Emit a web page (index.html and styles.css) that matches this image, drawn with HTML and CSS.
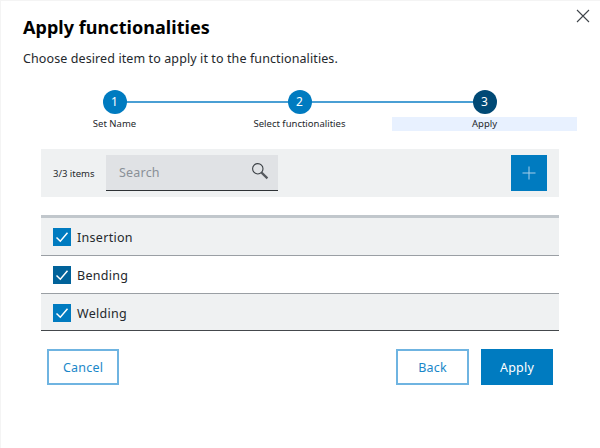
FILE: index.html
```html
<!DOCTYPE html>
<html lang="en">
<head>
<meta charset="utf-8">
<title>Apply functionalities</title>
<link rel="stylesheet" href="styles.css">
</head>
<body>
<div class="dialog">
  <button class="close" aria-label="Close">
    <svg width="14" height="14" viewBox="0 0 14 14"><path d="M1 1L13 13M13 1L1 13" fill="none" stroke="#3f444a" stroke-width="1.1"/></svg>
  </button>
  <h1 class="title">Apply functionalities</h1>
  <p class="subtitle">Choose desired item to apply it to the functionalities.</p>
  <div class="stepper">
    <div class="step step-first"><span class="circle">1</span><span class="step-label">Set Name</span></div>
    <div class="step"><span class="circle">2</span><span class="step-label">Select functionalities</span></div>
    <div class="step step-last step-active"><span class="circle">3</span><span class="step-label">Apply</span></div>
  </div>
  <div class="toolbar">
    <span class="count">3/3 items</span>
    <div class="search">
      <span class="search-text">Search</span>
      <svg width="18" height="18" viewBox="0 0 18 18"><circle cx="6.8" cy="6.8" r="5.2" fill="none" stroke="#3a3f44" stroke-width="1.1"/><path d="M10.6 10.6L16.4 16.4" stroke="#55595e" stroke-width="2.2"/></svg>
    </div>
    <button class="add" aria-label="Add">
      <svg width="14" height="14" viewBox="0 0 14 14"><path d="M7 0.5V13.5M0.5 7H13.5" stroke="#a8d0ea" stroke-width="1"/></svg>
    </button>
  </div>
  <ul class="list">
    <li class="row row-alt"><span class="check"><svg width="18" height="18" viewBox="0 0 18 18"><path d="M3.5 9.5L7.3 13.2L14.5 4.8" fill="none" stroke="#fff" stroke-width="1.5"/></svg></span>Insertion</li>
    <li class="row"><span class="check check-dark"><svg width="18" height="18" viewBox="0 0 18 18"><path d="M3.5 9.5L7.3 13.2L14.5 4.8" fill="none" stroke="#fff" stroke-width="1.5"/></svg></span>Bending</li>
    <li class="row row-alt row-end"><span class="check"><svg width="18" height="18" viewBox="0 0 18 18"><path d="M3.5 9.5L7.3 13.2L14.5 4.8" fill="none" stroke="#fff" stroke-width="1.5"/></svg></span>Welding</li>
  </ul>
  <div class="actions">
    <button class="btn btn-outline">Cancel</button>
    <div class="actions-right">
      <button class="btn btn-outline btn-back">Back</button>
      <button class="btn btn-primary">Apply</button>
    </div>
  </div>
</div>
</body>
</html>
```

FILE: styles.css
```css
* { box-sizing: border-box; }
html, body { margin: 0; padding: 0; }
body {
  width: 600px;
  height: 448px;
  background: #fff;
  font-family: "Noto Sans", "Open Sans", sans-serif;
  color: #1f2428;
  overflow: hidden;
}
.dialog {
  position: relative;
  width: 600px;
  height: 448px;
  padding: 15px 22px 0;
  border-left: 1px solid #f4f4f4;
  border-top: 1px solid #f4f4f4;
}
.close {
  position: absolute;
  top: 8px;
  right: 10px;
  width: 14px;
  height: 14px;
  padding: 0;
  border: 0;
  background: none;
  display: block;
}
.close svg { display: block; }
.title {
  margin: 0;
  font-size: 18px;
  line-height: 22px;
  font-weight: 700;
  letter-spacing: 0.05px;
  color: #000;
}
.subtitle {
  margin: 11px 0 0;
  font-size: 12.5px;
  line-height: 20px;
  letter-spacing: 0.1px;
  color: #24282c;
}
.stepper {
  display: grid;
  grid-template-columns: repeat(3, 185px);
  margin: 21px 0 0 -1px;
}
.step {
  position: relative;
  display: flex;
  flex-direction: column;
  align-items: center;
}
.step::before {
  content: "";
  position: absolute;
  top: 11px;
  left: 0;
  right: 0;
  height: 2px;
  background: #4a9fd4;
}
.step-first::before { left: 50%; }
.step-last::before { right: 50%; }
.circle {
  position: relative;
  width: 24px;
  height: 24px;
  border-radius: 50%;
  background: #007bc0;
  color: #fff;
  font-size: 12px;
  line-height: 24px;
  text-align: center;
}
.step-active .circle { background: #004975; }
.step-label {
  align-self: stretch;
  margin-top: 3px;
  height: 14px;
  font-size: 9.5px;
  line-height: 14px;
  text-align: center;
  color: #24282c;
}
.step-active .step-label { background: #e8f1ff; }
.toolbar {
  display: flex;
  align-items: center;
  width: 518px;
  height: 48px;
  margin: 18px 0 0 18px;
  padding: 0 12px;
  background: #eff1f2;
}
.count {
  width: 53px;
  font-size: 9.5px;
  color: #24282c;
}
.search {
  display: flex;
  align-items: center;
  justify-content: space-between;
  width: 172px;
  height: 36px;
  padding: 0 9px 0 13px;
  background: #e0e2e5;
  border-bottom: 1px solid #2e3236;
}
.search-text {
  font-size: 12.5px;
  letter-spacing: 0.2px;
  color: #8a9097;
}
.search svg { margin-bottom: 3px; }
.add {
  display: flex;
  align-items: center;
  justify-content: center;
  width: 36px;
  height: 36px;
  margin-left: auto;
  padding: 0;
  border: 0;
  background: #007bc0;
}
.list {
  width: 518px;
  margin: 18px 0 0 18px;
  padding: 0;
  list-style: none;
  border-top: 3px solid #c1c7cc;
}
.row {
  display: flex;
  align-items: center;
  gap: 6px;
  height: 38px;
  padding: 1px 0 0 12px;
  font-size: 12.5px;
  letter-spacing: 0.3px;
  color: #24282c;
  border-bottom: 1px solid #9a9fa4;
}
.row-alt { background: #eff1f2; }
.row-end { border-bottom: 1px solid #44484c; height: 37px; padding-top: 2px; }
.check {
  display: flex;
  align-items: center;
  justify-content: center;
  width: 18px;
  height: 18px;
  background: #007bc0;
}
.check-dark { background: #00629a; }
.check svg { display: block; }
.actions {
  display: flex;
  justify-content: space-between;
  width: 506px;
  margin: 18px 0 0 24px;
}
.actions-right { display: flex; gap: 12px; }
.btn {
  width: 72px;
  height: 36px;
  padding: 0;
  font-family: inherit;
  font-size: 12.5px;
  letter-spacing: 0.2px;
  border-radius: 0;
}
.btn-back { width: 73px; }
.btn-outline {
  background: #fff;
  border: 2px solid #6fb4e1;
  color: #1a87c9;
}
.btn-primary {
  background: #007bc0;
  border: 1px solid #007bc0;
  color: #fff;
}
```
